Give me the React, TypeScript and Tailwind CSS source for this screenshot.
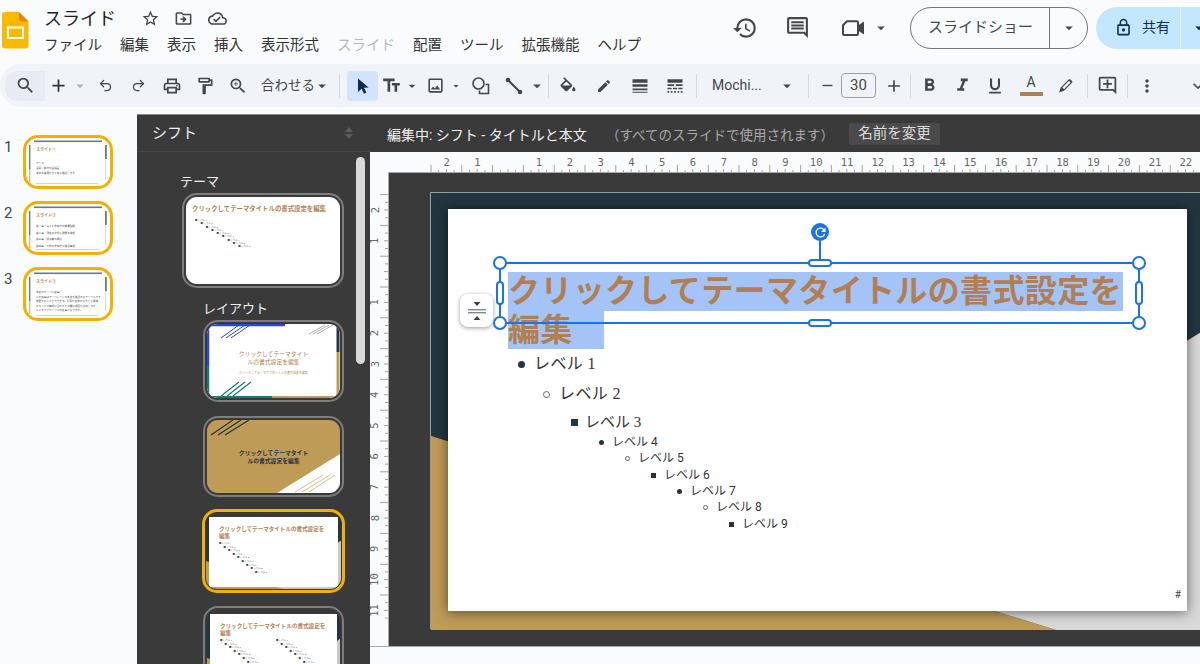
import type { ReactNode } from "react";
import { Undo2, Redo2 } from "lucide-react";
import {
  MdAdd,
  MdArrowDropDown,
  MdEdit,
  MdFormatBold,
  MdFormatItalic,
  MdFormatUnderlined,
  MdHistory,
  MdKeyboardArrowDown,
  MdLineStyle,
  MdLineWeight,
  MdLockOutline,
  MdMoreVert,
  MdOutlineAddComment,
  MdOutlineCloudDone,
  MdOutlineComment,
  MdOutlineDriveFileMove,
  MdOutlineFormatPaint,
  MdOutlineImage,
  MdOutlinePrint,
  MdOutlineStarBorder,
  MdOutlineZoomIn,
  MdRefresh,
  MdRemove,
  MdSearch,
  MdTextFields,
} from "react-icons/md";

const menus = ["ファイル", "編集", "表示", "挿入", "表示形式", "スライド", "配置", "ツール", "拡張機能", "ヘルプ"];

const levels = [
  { label: "レベル 1", row: "h-[30px] pl-[67px] text-[16px] tracking-[0.4px]", holder: "w-[13px] mr-[6px]", bullet: "size-[7px] rounded-full bg-[#1f3540]" },
  { label: "レベル 2", row: "h-[30px] pl-[92px] text-[16px] tracking-[0.4px]", holder: "w-[13px] mr-[6px]", bullet: "size-[7px] rounded-full border border-[#667]" },
  { label: "レベル 3", row: "h-[26px] pl-[118px] text-[15px]", holder: "w-[16px] mr-[3px]", bullet: "size-[7px] bg-[#1f3540]" },
  { label: "レベル 4", row: "h-[14px] pl-[145px] text-[12px]", holder: "w-[16px] mr-[3px]", bullet: "size-[5px] rounded-full bg-[#1f3540]" },
  { label: "レベル 5", row: "h-[18px] pl-[171px] text-[12px]", holder: "w-[16px] mr-[3px]", bullet: "size-[5px] rounded-full border border-[#667]" },
  { label: "レベル 6", row: "h-[16px] pl-[197px] text-[12px]", holder: "w-[16px] mr-[3px]", bullet: "size-[5px] bg-[#1f3540]" },
  { label: "レベル 7", row: "h-[16px] pl-[223px] text-[12px]", holder: "w-[16px] mr-[3px]", bullet: "size-[5px] rounded-full bg-[#1f3540]" },
  { label: "レベル 8", row: "h-[16px] pl-[249px] text-[12px]", holder: "w-[16px] mr-[3px]", bullet: "size-[5px] rounded-full border border-[#667]" },
  { label: "レベル 9", row: "h-[18px] pl-[275px] text-[12px]", holder: "w-[16px] mr-[3px]", bullet: "size-[5px] bg-[#1f3540]" },
];

function Slot({ w, children }: { w: string; children?: ReactNode }) {
  return <div className={`${w} h-full shrink-0 flex items-center justify-center`}>{children}</div>;
}

function Sep({ w }: { w: string }) {
  return (
    <Slot w={w}>
      <div className="w-px h-[24px] bg-[#d5d9de]" />
    </Slot>
  );
}

function Caret({ w, light }: { w: string; light?: boolean }) {
  return (
    <Slot w={w}>
      <MdArrowDropDown size={18} className={light ? "text-[#b4b8bc]" : "text-[#444746]"} />
    </Slot>
  );
}

function CursorIcon() {
  return (
    <svg width="16" height="18" viewBox="0 0 16 18">
      <path d="M3 1.5 L3 15 L6.6 11.8 L9 16.8 L11.4 15.6 L9 10.8 L13.6 10.4 Z" fill="#0b2a55" />
    </svg>
  );
}

function ShapeIcon() {
  return (
    <svg width="20" height="20" viewBox="0 0 20 20" fill="none" stroke="#444746" strokeWidth="1.6">
      <circle cx="7.5" cy="7.5" r="5.5" />
      <path d="M14.5 8.5 H17.5 V17.5 H8.5 V14.5" />
    </svg>
  );
}

function LineIcon() {
  return (
    <svg width="18" height="18" viewBox="0 0 18 18" fill="none" stroke="#444746" strokeWidth="2">
      <path d="M3 3 L15 15" />
      <circle cx="3" cy="3" r="1.3" fill="#444746" />
      <circle cx="15" cy="15" r="1.3" fill="#444746" />
    </svg>
  );
}

function FillIcon() {
  return (
    <svg width="20" height="17" viewBox="0 0 24 20" fill="#444746">
      <path d="M16.56 8.94L7.62 0 6.21 1.41l2.38 2.38-5.15 5.15c-.59.59-.59 1.54 0 2.12l5.5 5.5c.29.29.68.44 1.06.44s.77-.15 1.06-.44l5.5-5.5c.59-.58.59-1.53 0-2.11zM5.21 10L10 5.21 14.79 10H5.21zM19 11.5s-2 2.17-2 3.5c0 1.1.9 2 2 2s2-.9 2-2c0-1.33-2-3.5-2-3.5z" />
    </svg>
  );
}

function MarkerIcon() {
  return (
    <svg width="17" height="17" viewBox="0 0 17 17" fill="#444746">
      <path d="M2 15.5 L3.8 10.6 L11.6 2.4 a1.2 1.2 0 0 1 1.7 0 L15 4.1 a1.2 1.2 0 0 1 0 1.7 L7 13.8 Z" />
      <path d="M5.4 10.6 L11.9 3.8 L13.6 5.5 L7 12.2 Z" fill="#f0f4f9" />
    </svg>
  );
}

function CameraIcon() {
  return (
    <svg width="27" height="24" viewBox="0 0 27 24" fill="none">
      <path d="M7 5.2 H17 a1 1 0 0 1 1 1 V18 a1 1 0 0 1 -1 1 H4 a1 1 0 0 1 -1 -1 V9.2 Z" stroke="#444746" strokeWidth="2" />
      <path d="M18 9.5 L24 5.5 V18.5 L18 14.5 Z" fill="#444746" />
    </svg>
  );
}

function Toolbar() {
  const ic = "text-[#444746]";
  return (
    <div className="h-[43px] bg-[#f0f4f9] rounded-l-[22px] flex items-center pl-[5px] text-[#444746]">
      <div className="w-[40px] h-[30px] shrink-0 bg-[#e7ecf4] rounded-l-[12px] flex items-center justify-center">
        <MdSearch size={21} className={ic} />
      </div>
      <Slot w="w-[26px]"><MdAdd size={21} className="text-[#333]" /></Slot>
      <Caret w="w-[18px]" light />
      <Slot w="w-[33px]"><Undo2 size={15} className={ic} /></Slot>
      <Slot w="w-[33px]"><Redo2 size={15} className={ic} /></Slot>
      <Slot w="w-[33px]"><MdOutlinePrint size={20} className={ic} /></Slot>
      <Slot w="w-[33px]"><MdOutlineFormatPaint size={20} className={ic} /></Slot>
      <Slot w="w-[34px]"><MdOutlineZoomIn size={20} className={ic} /></Slot>
      <div className="w-[77px] shrink-0 flex items-center pl-[6px] text-[13.5px] whitespace-nowrap">
        合わせる
        <MdArrowDropDown size={18} className="-ml-[2px] shrink-0" />
      </div>
      <Sep w="w-[15px]" />
      <div className="w-[31px] h-[30px] shrink-0 rounded-[4px] bg-[#d3e3fd] flex items-center justify-center">
        <CursorIcon />
      </div>
      <Slot w="w-[26px]"><MdTextFields size={21} className={ic} /></Slot>
      <Caret w="w-[16px]" />
      <Slot w="w-[30px]"><MdOutlineImage size={19} className={ic} /></Slot>
      <Caret w="w-[12px]" />
      <Slot w="w-[38px]"><ShapeIcon /></Slot>
      <Slot w="w-[28px]"><LineIcon /></Slot>
      <Caret w="w-[18px]" />
      <Sep w="w-[4px]" />
      <Slot w="w-[36px]"><FillIcon /></Slot>
      <Slot w="w-[36px]"><MdEdit size={16} className={ic} /></Slot>
      <Slot w="w-[36px]"><MdLineWeight size={20} className={ic} /></Slot>
      <Slot w="w-[34px]"><MdLineStyle size={20} className={ic} /></Slot>
      <Sep w="w-[8px]" />
      <div className="w-[76px] shrink-0 pl-[12px] text-[14px]">Mochi...</div>
      <Caret w="w-[22px]" />
      <Sep w="w-[20px]" />
      <Slot w="w-[18px]"><MdRemove size={17} className={ic} /></Slot>
      <div className="ml-[5px] w-[35px] h-[25px] shrink-0 border border-[#9aa0a6] rounded-[4px] flex items-center justify-center text-[15px]">
        30
      </div>
      <Slot w="ml-[3px] w-[30px]"><MdAdd size={20} className={ic} /></Slot>
      <Sep w="w-[2px]" />
      <Slot w="w-[36px]"><MdFormatBold size={21} className={ic} /></Slot>
      <Slot w="w-[30px]"><MdFormatItalic size={21} className={ic} /></Slot>
      <Slot w="w-[36px]"><MdFormatUnderlined size={20} className={ic} /></Slot>
      <Slot w="w-[36px]">
        <div className="flex flex-col items-center">
          <span className="text-[14px] leading-[15px]">A</span>
          <div className="w-[23px] h-[4px] mt-[2px] bg-[#b17f53]" />
        </div>
      </Slot>
      <Slot w="w-[32px]"><MarkerIcon /></Slot>
      <Sep w="w-[12px]" />
      <Slot w="w-[28px]"><MdOutlineAddComment size={21} className={ic} /></Slot>
      <Sep w="w-[12px]" />
      <Slot w="w-[28px]"><MdMoreVert size={20} className={ic} /></Slot>
      <div className="ml-auto -mr-[8px]">
        <MdKeyboardArrowDown size={20} className={ic} />
      </div>
    </div>
  );
}

function Header() {
  return (
    <div className="h-[64px] flex items-start">
      <svg width="27" height="37" viewBox="0 0 27 37" className="ml-[2px] mt-[12px] shrink-0">
        <path d="M3 0 H17 L26.5 9.5 V33.5 a3 3 0 0 1 -3 3 H3 a3 3 0 0 1 -3 -3 V3 a3 3 0 0 1 3 -3 Z" fill="#fbb900" />
        <path d="M17 0 L26.5 9.5 H19.5 a2.5 2.5 0 0 1 -2.5 -2.5 Z" fill="#ea8600" />
        <rect x="6" y="15.5" width="15" height="10.5" fill="none" stroke="#fff" strokeWidth="2" />
      </svg>
      <div className="ml-[15px] pt-[6px]">
        <div className="flex items-center h-[25px] text-[#1f1f1f]">
          <span className="text-[18px] w-[97px]">スライド</span>
          <MdOutlineStarBorder size={19} className="text-[#444746]" />
          <MdOutlineDriveFileMove size={19} className="ml-[14px] text-[#444746]" />
          <MdOutlineCloudDone size={19} className="ml-[15px] text-[#444746]" />
        </div>
        <div className="flex gap-[18px] mt-[4px] text-[14.5px] leading-[22px] text-[#333]">
          {menus.map((m) => (
            <span key={m} className={m === "スライド" ? "text-[#b9b9b9]" : ""}>
              {m}
            </span>
          ))}
        </div>
      </div>
      <div className="ml-auto -mr-[8px] h-[54px] flex items-center pt-[1px] text-[#444746]">
        <MdHistory size={26} />
        <MdOutlineComment size={25} className="ml-[27px]" />
        <div className="ml-[30px]">
          <CameraIcon />
        </div>
        <MdArrowDropDown size={18} className="ml-[5px]" />
        <div className="ml-[20px] w-[178px] h-[42px] rounded-full border border-[#747775] flex items-center text-[#444746]">
          <span className="w-[139px] pl-[17px] text-[15px] border-r border-[#747775] h-full flex items-center">
            スライドショー
          </span>
          <span className="flex-1 flex justify-center">
            <MdArrowDropDown size={18} />
          </span>
        </div>
        <div className="ml-[8px] w-[112px] h-[42px] rounded-l-full bg-[#c2e7ff] flex items-center text-[#0b2f50]">
          <MdLockOutline size={19} className="ml-[18px]" />
          <span className="ml-[9px] text-[14px] w-[38px]">共有</span>
          <div className="w-px h-full bg-[#e4f3fd]" />
          <MdArrowDropDown size={18} className="ml-[9px]" />
        </div>
      </div>
    </div>
  );
}

function FilmThumb({ title, lines, body }: { title: string; lines: string[]; body: string }) {
  return (
    <div className="relative w-[90px] h-[54px] rounded-[15px] border-[3px] border-[#f4b000] bg-white overflow-hidden">
      <svg className="absolute inset-0" width="84" height="48" viewBox="0 0 84 48">
        <rect x="8" y="2.5" width="68" height="1.6" fill="#6b7b83" />
        <rect x="3" y="7" width="1.4" height="24" fill="#6b7b83" />
        <rect x="3" y="31" width="1.4" height="13" fill="#d4bd8f" />
        <rect x="79" y="7" width="1.8" height="14" fill="#6b7b83" />
        <rect x="79" y="21" width="1" height="20" fill="#d5d9db" />
        <rect x="10" y="45" width="62" height="1" fill="#e4d4b4" />
      </svg>
      <div className="relative pl-[10px] pt-[9px] text-[#555]">
        <div className="text-[4px] leading-[6px] font-bold text-[#b17f53]">{title}</div>
        <div className={`flex flex-col ${body}`}>
          {lines.map((l) => (
            <div key={l} className="text-[2.6px] leading-[3px] whitespace-nowrap">
              {l}
            </div>
          ))}
        </div>
      </div>
    </div>
  );
}

function Filmstrip() {
  const slides = [
    { n: 1, title: "スライド①", body: "mt-[9px] gap-[2px]", lines: ["テーマ", "会場：都内の会議室", "本日の議題をまとめて確認します"] },
    { n: 2, title: "スライド②", body: "mt-[6px] gap-[3.5px]", lines: ["第一章：導入と進め方の概要説明", "第二章：現在の状況と課題の整理", "第三章：解決案の検討", "第四章：今後の進め方と確認事項"] },
    { n: 3, title: "スライド③", body: "mt-[6px] gap-[1.5px]", lines: ["本文のサンプル文章", "この文章はテンプレートの本文を確認するサンプルです", "変更することができます。行間や文字の大きさも調整", "スライドの構成に合わせて必要な項目を追加します", "ここまでがサンプルの文章となります。"] },
  ];
  return (
    <div className="w-[137px] shrink-0 pt-[21px] flex flex-col gap-[12px]">
      {slides.map((s) => (
        <div key={s.n} className="flex">
          <div className="w-[23px] pl-[4px] text-[15px] leading-[24px] text-[#444]">{s.n}</div>
          <FilmThumb title={s.title} lines={s.lines} body={s.body} />
        </div>
      ))}
    </div>
  );
}

function MiniLevels({ step, gap, size }: { step: number; gap: string; size: string }) {
  return (
    <div className={`flex flex-col ${gap}`}>
      {[1, 2, 3, 4, 5, 6, 7, 8, 9].map((n, i) => (
        <div key={n} className={`${size} leading-[3px] whitespace-nowrap text-[#444]`} style={{ marginLeft: i * step }}>
          ■ レベル {n}
        </div>
      ))}
    </div>
  );
}

function Frame({ selected, className, children }: { selected?: boolean; className: string; children: ReactNode }) {
  return (
    <div
      className={`${className} rounded-[15px] overflow-hidden ${
        selected ? "border-[3px] border-[#f4b000] p-[1px]" : "border-2 border-[#7d7d7d] p-[2px]"
      }`}
    >
      <div className="relative w-full h-full rounded-[11px] overflow-hidden">{children}</div>
    </div>
  );
}

function MasterThumb({ columns }: { columns?: boolean }) {
  return (
    <div className="relative h-full bg-[#23363f]">
      <svg className="absolute inset-0" width="137" height="78" viewBox="0 0 137 78">
        <polygon points="0,44 100,78 0,78" fill="#bf9b58" />
        <polygon points="100,78 137,78 137,22 70,70" fill="#c9c9c9" />
      </svg>
      <div className="relative ml-[3px] mr-[3px] mt-[4px] h-[70px] bg-white pl-[10px] pt-[9px]">
        <div className="text-[5.55px] leading-[7px] font-bold text-[#b17f53] w-[108px]">
          クリックしてテーマタイトルの書式設定を編集
        </div>
        <div className="flex mt-[2px]">
          <div className={columns ? "w-[56px]" : ""}>
            <MiniLevels step={4.5} gap="gap-[0.6px]" size="text-[2.4px]" />
          </div>
          {columns && <MiniLevels step={4.5} gap="gap-[0.6px]" size="text-[2.4px]" />}
        </div>
      </div>
    </div>
  );
}

function ThemePanel() {
  return (
    <div className="w-[233px] shrink-0 bg-[#3a3a3a] flex flex-col border-t border-[#8a8a8a]">
      <div className="h-[37px] shrink-0 flex items-center justify-between pl-[15px] pr-[17px] border-b border-[#474747]">
        <span className="text-[15px] text-[#eee]">シフト</span>
        <svg width="8" height="12" viewBox="0 0 8 12" fill="#5c5c5c">
          <path d="M4 0 L8 5 H0 Z M4 12 L0 7 H8 Z" />
        </svg>
      </div>
      <div className="relative flex-1 overflow-hidden">
        <div className="absolute right-[5px] top-[5px] w-[9px] h-[207px] rounded-full bg-[#d9d9d9]" />
        <div className="pl-[43px] pt-[21px] text-[#eee]">
          <div className="text-[13px] leading-[18px]">テーマ</div>
          <div className="ml-[2px] mt-[2px]">
            <Frame className="w-[162px] h-[95px]">
              <div className="h-full bg-white pl-[6px] pt-[8px]">
                <div className="text-[6.4px] leading-[9px] font-bold text-[#b17f53] whitespace-nowrap">
                  クリックしてテーマタイトルの書式設定を編集
                </div>
                <div className="mt-[5px] ml-[3px]">
                  <MiniLevels step={5.4} gap="gap-[0.3px]" size="text-[2.4px]" />
                </div>
              </div>
            </Frame>
          </div>
          <div className="ml-[23px] mt-[12px]">
            <div className="text-[13px] leading-[18px]">レイアウト</div>
            <div className="mt-[2px] flex flex-col items-start">
              <Frame className="w-[141px] h-[82px]">
                <div className="relative h-full bg-white">
                  <svg className="absolute inset-0" width="133" height="74" viewBox="0 0 133 74" fill="none">
                    <path d="M0 1 H78" stroke="#2347e0" strokeWidth="2.5" />
                    <path d="M1 0 V42" stroke="#2347e0" strokeWidth="2.5" />
                    <path d="M1 42 V74" stroke="#13806f" strokeWidth="2.5" />
                    <path d="M0 73 H65" stroke="#13806f" strokeWidth="2" />
                    <path d="M65 73 H133" stroke="#bf9b58" strokeWidth="2" />
                    <path d="M131 0 V28" stroke="#23363f" strokeWidth="3" />
                    <path d="M131 28 V74" stroke="#bf9b58" strokeWidth="3" />
                    <path d="M14 14 L32 1 M19 14 L38 1 M24 14 L43 1" stroke="#2347e0" strokeWidth="1" />
                    <path d="M102 10 L118 1 M106 10 L122 1 M110 10 L126 1" stroke="#9a9a9a" strokeWidth="0.8" />
                    <path d="M14 72 L32 58 M20 72 L38 58 M26 72 L44 58" stroke="#13806f" strokeWidth="1.2" />
                    <path d="M100 72 L112 64 M106 72 L118 64" stroke="#ffffff" strokeWidth="1.2" />
                  </svg>
                  <div className="relative pt-[26px] text-center text-[#b17f53]">
                    <div className="text-[5.8px] leading-[8px]">クリックしてテーマタイト</div>
                    <div className="text-[5.8px] leading-[8px]">ルの書式設定を編集</div>
                    <div className="text-[3px] leading-[4px] mt-[5px]">クリックしてテーマサブタイトルの書式設定を編集</div>
                  </div>
                </div>
              </Frame>
              <div className="mt-[14px]">
                <Frame className="w-[141px] h-[81px]">
                  <div className="relative h-full bg-[#bf9b58]">
                    <svg className="absolute inset-0" width="133" height="73" viewBox="0 0 133 73" fill="none">
                      <polygon points="70,73 133,34 133,73" fill="#fff" />
                      <path d="M4 15 L26 0 M11 15 L34 0 M18 15 L42 0" stroke="#23363f" strokeWidth="1.2" />
                      <path d="M88 72 L116 55 M95 72 L123 55 M102 72 L128 55" stroke="#d9bd88" strokeWidth="1" />
                    </svg>
                    <div className="relative pt-[29px] text-center font-bold text-[#23363f]">
                      <div className="text-[5.8px] leading-[8px]">クリックしてテーマタイト</div>
                      <div className="text-[5.8px] leading-[8px]">ルの書式設定を編集</div>
                    </div>
                  </div>
                </Frame>
              </div>
              <div className="mt-[12px] -ml-[1px]">
                <Frame selected className="w-[143px] h-[84px]">
                  <MasterThumb />
                </Frame>
              </div>
              <div className="mt-[13px]">
                <Frame className="w-[141px] h-[82px]">
                  <MasterThumb columns />
                </Frame>
              </div>
            </div>
          </div>
        </div>
      </div>
    </div>
  );
}

function RulerH() {
  const ticks = Array.from({ length: 25 }, (_, i) => 431 + i * 30.8 - 370);
  return (
    <svg width="830" height="20" className="block">
      {ticks.map((x) => (
        <path
          key={x}
          stroke="#a0a0a0"
          strokeWidth="1"
          d={`M${x} 13 V20 M${x + 7.7} 18 V20 M${x + 15.4} 17 V20 M${x + 23.1} 18 V20`}
        />
      ))}
      {ticks.map((x, i) =>
        i === 2 ? null : (
          <text key={i} x={x + 15.6} y="14" textAnchor="middle" fontSize="10.5" fill="#666" fontFamily="DejaVu Sans Mono, monospace">
            {i < 2 ? 2 - i : i - 2}
          </text>
        )
      )}
    </svg>
  );
}

function RulerV() {
  const ticks = Array.from({ length: 14 }, (_, i) => 194.6 + i * 30.8 - 172);
  return (
    <svg width="18" height="474" className="block shrink-0">
      {ticks.map((y) => (
        <path key={y} stroke="#a0a0a0" d={`M10 ${y} H18 M15 ${y + 7.7} H18 M14 ${y + 15.4} H18 M15 ${y + 23.1} H18`} />
      ))}
      {ticks.map((y, i) =>
        i === 2 ? null : (
          <text
            key={i}
            x="5"
            y={y + 15.4}
            textAnchor="middle"
            fontSize="10.5"
            fill="#666"
            fontFamily="DejaVu Sans Mono, monospace"
            transform={`rotate(-90 5 ${y + 15.4})`}
            dy="3.5"
          >
            {i < 2 ? 2 - i : i - 2}
          </text>
        )
      )}
    </svg>
  );
}

function Handle({ className }: { className: string }) {
  return <div className={`absolute bg-white border-[2.5px] border-[#1a73e8] ${className}`} />;
}

function Selection() {
  return (
    <>
      {/* side button */}
      <div className="absolute left-[71px] top-[121px] size-[33px] bg-white rounded-[8px] shadow-[0_1px_4px_rgba(0,0,0,0.4)] flex items-center justify-center">
        <svg width="20" height="20" viewBox="0 0 20 20" fill="#3c4043">
          <path d="M6.5 1 H13.5 L10 5 Z M6.5 19 H13.5 L10 15 Z" />
          <rect x="1" y="8" width="18" height="1.4" fill="#80868b" />
          <rect x="1" y="11" width="18" height="1.4" fill="#80868b" />
        </svg>
      </div>
      {/* rotate */}
      <div className="absolute left-[422px] top-[50px] size-[18px] rounded-full bg-[#1a73e8] flex items-center justify-center">
        <MdRefresh size={15} className="text-white" />
      </div>
      <div className="absolute left-[430px] top-[67px] w-[2px] h-[20px] bg-[#1a73e8]" />
      {/* frame */}
      <div className="absolute left-[110px] top-[89px] w-[641px] h-[62px] border-2 border-[#1a73e8]">
        <Handle className="-left-[8px] -top-[8px] size-[14px] rounded-full" />
        <Handle className="-right-[8px] -top-[8px] size-[14px] rounded-full" />
        <Handle className="-left-[8px] -bottom-[8px] size-[14px] rounded-full" />
        <Handle className="-right-[8px] -bottom-[8px] size-[14px] rounded-full" />
        <Handle className="left-[307px] -top-[5px] w-[24px] h-[8px] rounded-full" />
        <Handle className="left-[307px] -bottom-[5px] w-[24px] h-[8px] rounded-full" />
        <Handle className="-left-[5px] top-[17px] w-[8px] h-[24px] rounded-full" />
        <Handle className="-right-[5px] top-[17px] w-[8px] h-[24px] rounded-full" />
      </div>
    </>
  );
}

function Canvas() {
  return (
    <div className="relative flex-1 h-[474px] bg-[#3a3a3a] overflow-hidden border-l border-t border-[#a8a8a8] pl-[41px] pt-[19px]">
      <div className="relative w-[775px] h-[437px] bg-[#23363f] border-l border-t border-[#9aa0a0]">
        <svg className="absolute inset-0" width="775" height="437" viewBox="0 0 775 437">
          <polygon points="0,243 625,437 0,437" fill="#bf9b58" />
          <polygon points="625,437 775,437 775,136 400,367" fill="#d9d9d9" />
        </svg>
        <div className="relative ml-[17px] mt-[16px] w-[739px] h-[402px] bg-white shadow-[0_1px_12px_rgba(0,0,0,0.55)]">
          <div className="pl-[60px] pt-[63px] h-[140px] font-bold text-[32px] leading-[38.5px] tracking-[0.36px] text-[#b17f53] whitespace-nowrap">
            <div className="w-[615px] h-[38.5px] bg-[#a4c4f8]">クリックしてテーマタイトルの書式設定を</div>
            <div className="w-[96px] h-[38.5px] bg-[#a4c4f8]">編集</div>
          </div>
          <div className="text-[#333] font-['Liberation_Serif','Noto_Sans_CJK_JP',serif]">
            {levels.map((l) => (
              <div key={l.label} className={`flex items-center ${l.row} ${l.row.includes("12px") ? "font-['Roboto','Noto_Sans_CJK_JP',sans-serif]" : ""}`}>
                <div className={`${l.holder} flex justify-center`}>
                  <div className={l.bullet} />
                </div>
                <span>{l.label}</span>
              </div>
            ))}
          </div>
          <div className="absolute right-[6px] bottom-[10px] text-[10px] leading-[12px] text-[#444]">#</div>
        </div>
      </div>
      <Selection />
    </div>
  );
}

function Editor() {
  return (
    <div className="flex-1 min-w-0 flex flex-col">
      <div className="h-[38px] shrink-0 bg-[#3a3a3a] border-t border-[#8a8a8a] flex items-center pl-[17px]">
        <span className="pt-[4px] text-[14px] text-[#f1f1f1] w-[219px] whitespace-nowrap">編集中: シフト - タイトルと本文</span>
        <span className="pt-[3px] text-[13.5px] text-[#a8a8a8] w-[243px] whitespace-nowrap">（すべてのスライドで使用されます）</span>
        <span className="h-[22px] w-[91px] rounded-[2px] bg-[#4a4a4a] text-[14.5px] text-[#ddd] flex items-center justify-center">
          名前を変更
        </span>
      </div>
      <RulerH />
      <div className="flex border-b border-[#a8a8a8]">
        <RulerV />
        <Canvas />
      </div>
    </div>
  );
}

export default function App() {
  return (
    <div className="w-[1200px] h-[664px] overflow-hidden bg-[#f9fbfd] font-['Roboto','Noto_Sans_CJK_JP',sans-serif]">
      <Header />
      <Toolbar />
      <div className="mt-[7px] h-[550px] flex">
        <Filmstrip />
        <ThemePanel />
        <Editor />
      </div>
    </div>
  );
}
